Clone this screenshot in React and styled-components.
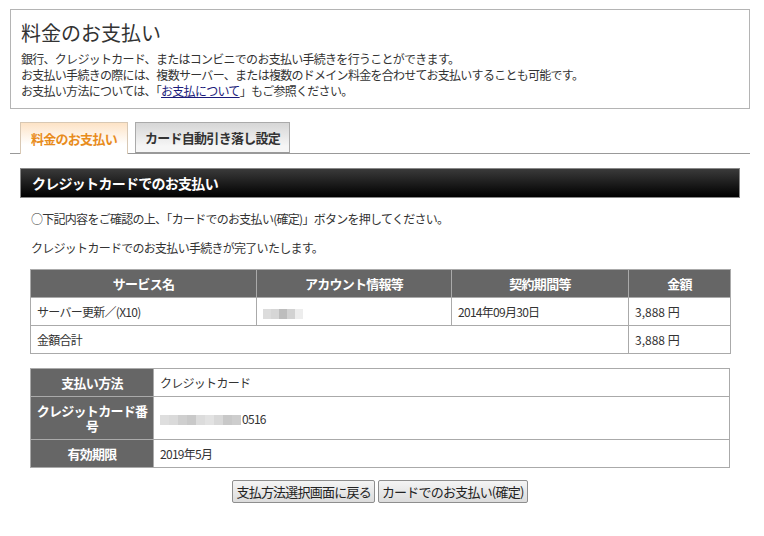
import React from 'react';
import styled, { createGlobalStyle } from 'styled-components';

const GlobalStyle = createGlobalStyle`
    body {
        margin: 0;
        background: #fff;
        font-family: "Noto Sans CJK JP", "Liberation Sans", sans-serif;
        color: #333;
        font-size: 12px;
        letter-spacing: -0.06em;
    }
`

const Page = styled.div`
    width: 740px;
    margin: 9px 0 0 10px;
`

const IntroBox = styled.div`
    border: 1px solid #b4b4b4;
    padding: 11px 10px 9px;
`

const Title = styled.h1`
    margin: 0 0 6px;
    font-size: 20px;
    font-weight: normal;
    line-height: 24px;
    letter-spacing: 0;
    color: #333;
`

const Intro = styled.p`
    margin: 0;
    line-height: 16px;
    a {
        color: #1a1a7a;
        text-decoration: underline;
    }
`

const TabBar = styled.div`
    display: flex;
    gap: 7px;
    margin-top: 13px;
    padding-left: 10px;
    border-bottom: 1px solid #999;
    height: 31px;
`

const Tab = styled.div`
    padding: 0 ${p => p.$active ? 10 : 9}px;
    display: flex;
    align-items: center;
    font-size: 13px;
    font-weight: bold;
    box-sizing: border-box;
    height: ${p => p.$active ? 32 : 31}px;
    color: ${p => p.$active ? '#e88c1c' : '#333'};
    border: 1px solid ${p => p.$active ? '#d8c8b4' : '#aaa'};
    border-bottom: ${p => p.$active ? 'none' : '1px solid #999'};
    background: ${p => p.$active
        ? 'linear-gradient(#fde3c6, #fff 70%)'
        : 'linear-gradient(#d6d6d6, #f6f6f6 80%)'};
`

const Content = styled.div`
    padding: 14px 10px 0;
`

const SectionHeader = styled.h2`
    margin: 0;
    height: 30px;
    box-sizing: border-box;
    border: 1px solid #888;
    background: linear-gradient(#3a3a3a, #000);
    color: #fff;
    font-size: 14px;
    font-weight: bold;
    line-height: 28px;
    padding-left: 11px;
`

const Note = styled.p`
    margin: ${p => p.$top}px 0 0 11px;
    line-height: 16px;
`

const Table = styled.table`
    width: 700px;
    margin: ${p => p.$top}px 0 0 10px;
    border-collapse: collapse;
    table-layout: fixed;
    font-size: 12px;
`

const Th = styled.th`
    background: #666;
    color: #fff;
    font-size: 13px;
    font-weight: bold;
    text-align: center;
    border: 1px solid #aaa;
    height: ${p => p.$h || 27}px;
    padding: 0 3px;
    line-height: 15px;
`

const Td = styled.td`
    border: 1px solid #aaa;
    height: ${p => p.$h || 27}px;
    padding: 0 6px;
    line-height: 15px;
    color: #333;
`

const Amount = styled.span`
    letter-spacing: 0;
`

const Blur = styled.span`
    display: inline-flex;
    vertical-align: middle;
    margin-right: 1px;
    span {
        width: ${p => p.$w || 9}px;
        height: 10px;
    }
`

const Masked = ({ shades, w }) => (
    <Blur $w={w}>
        {shades.map((c, i) => <span key={i} style={{ background: c }} />)}
    </Blur>
)

const Actions = styled.div`
    display: flex;
    justify-content: center;
    gap: 3px;
    margin-top: 12px;
`

const Button = styled.button`
    height: 23px;
    padding: 0 3px;
    font-family: inherit;
    font-size: 13px;
    letter-spacing: -0.06em;
    color: #222;
    border: 1px solid #8e8e8e;
    border-radius: 2px;
    background: linear-gradient(#f4f4f4, #dcdcdc);
`

export default function App() {
    return <>
        <GlobalStyle />
        <Page>
            <IntroBox>
                <Title>料金のお支払い</Title>
                <Intro>
                    銀行、クレジットカード、またはコンビニでのお支払い手続きを行うことができます。<br />
                    お支払い手続きの際には、複数サーバー、または複数のドメイン料金を合わせてお支払いすることも可能です。<br />
                    お支払い方法については、「<a href="#">お支払について</a>」もご参照ください。
                </Intro>
            </IntroBox>
            <TabBar>
                <Tab $active>料金のお支払い</Tab>
                <Tab>カード自動引き落し設定</Tab>
            </TabBar>
            <Content>
                <SectionHeader>クレジットカードでのお支払い</SectionHeader>
                <Note $top={13}>○下記内容をご確認の上、「カードでのお支払い(確定)」ボタンを押してください。</Note>
                <Note $top={13}>クレジットカードでのお支払い手続きが完了いたします。</Note>
                <Table $top={13}>
                    <colgroup>
                        <col style={{ width: 226 }} />
                        <col style={{ width: 195 }} />
                        <col style={{ width: 177 }} />
                        <col style={{ width: 102 }} />
                    </colgroup>
                    <thead>
                        <tr>
                            <Th>サービス名</Th>
                            <Th>アカウント情報等</Th>
                            <Th>契約期間等</Th>
                            <Th>金額</Th>
                        </tr>
                    </thead>
                    <tbody>
                        <tr>
                            <Td>サーバー更新／(X10)</Td>
                            <Td><Masked w={8} shades={['#dcdcdc', '#d6d6d6', '#bdbdbd', '#d2d2d2', '#ededed']} /></Td>
                            <Td>2014年09月30日</Td>
                            <Td><Amount>3,888 円</Amount></Td>
                        </tr>
                        <tr>
                            <Td colSpan={3}>金額合計</Td>
                            <Td><Amount>3,888 円</Amount></Td>
                        </tr>
                    </tbody>
                </Table>
                <Table $top={14}>
                    <colgroup>
                        <col style={{ width: 123 }} />
                        <col />
                    </colgroup>
                    <tbody>
                        <tr>
                            <Th>支払い方法</Th>
                            <Td>クレジットカード</Td>
                        </tr>
                        <tr>
                            <Th $h={42}>クレジットカード番号</Th>
                            <Td $h={42}>
                                <Masked w={9} shades={['#dedede', '#dadada', '#cfcfcf', '#c9c9c9', '#dcdcdc', '#e2e2e2', '#d8d8d8', '#c8c8c8', '#cdcdcd']} />
                                0516
                            </Td>
                        </tr>
                        <tr>
                            <Th>有効期限</Th>
                            <Td>2019年5月</Td>
                        </tr>
                    </tbody>
                </Table>
                <Actions>
                    <Button>支払方法選択画面に戻る</Button>
                    <Button>カードでのお支払い(確定)</Button>
                </Actions>
            </Content>
        </Page>
    </>
}
